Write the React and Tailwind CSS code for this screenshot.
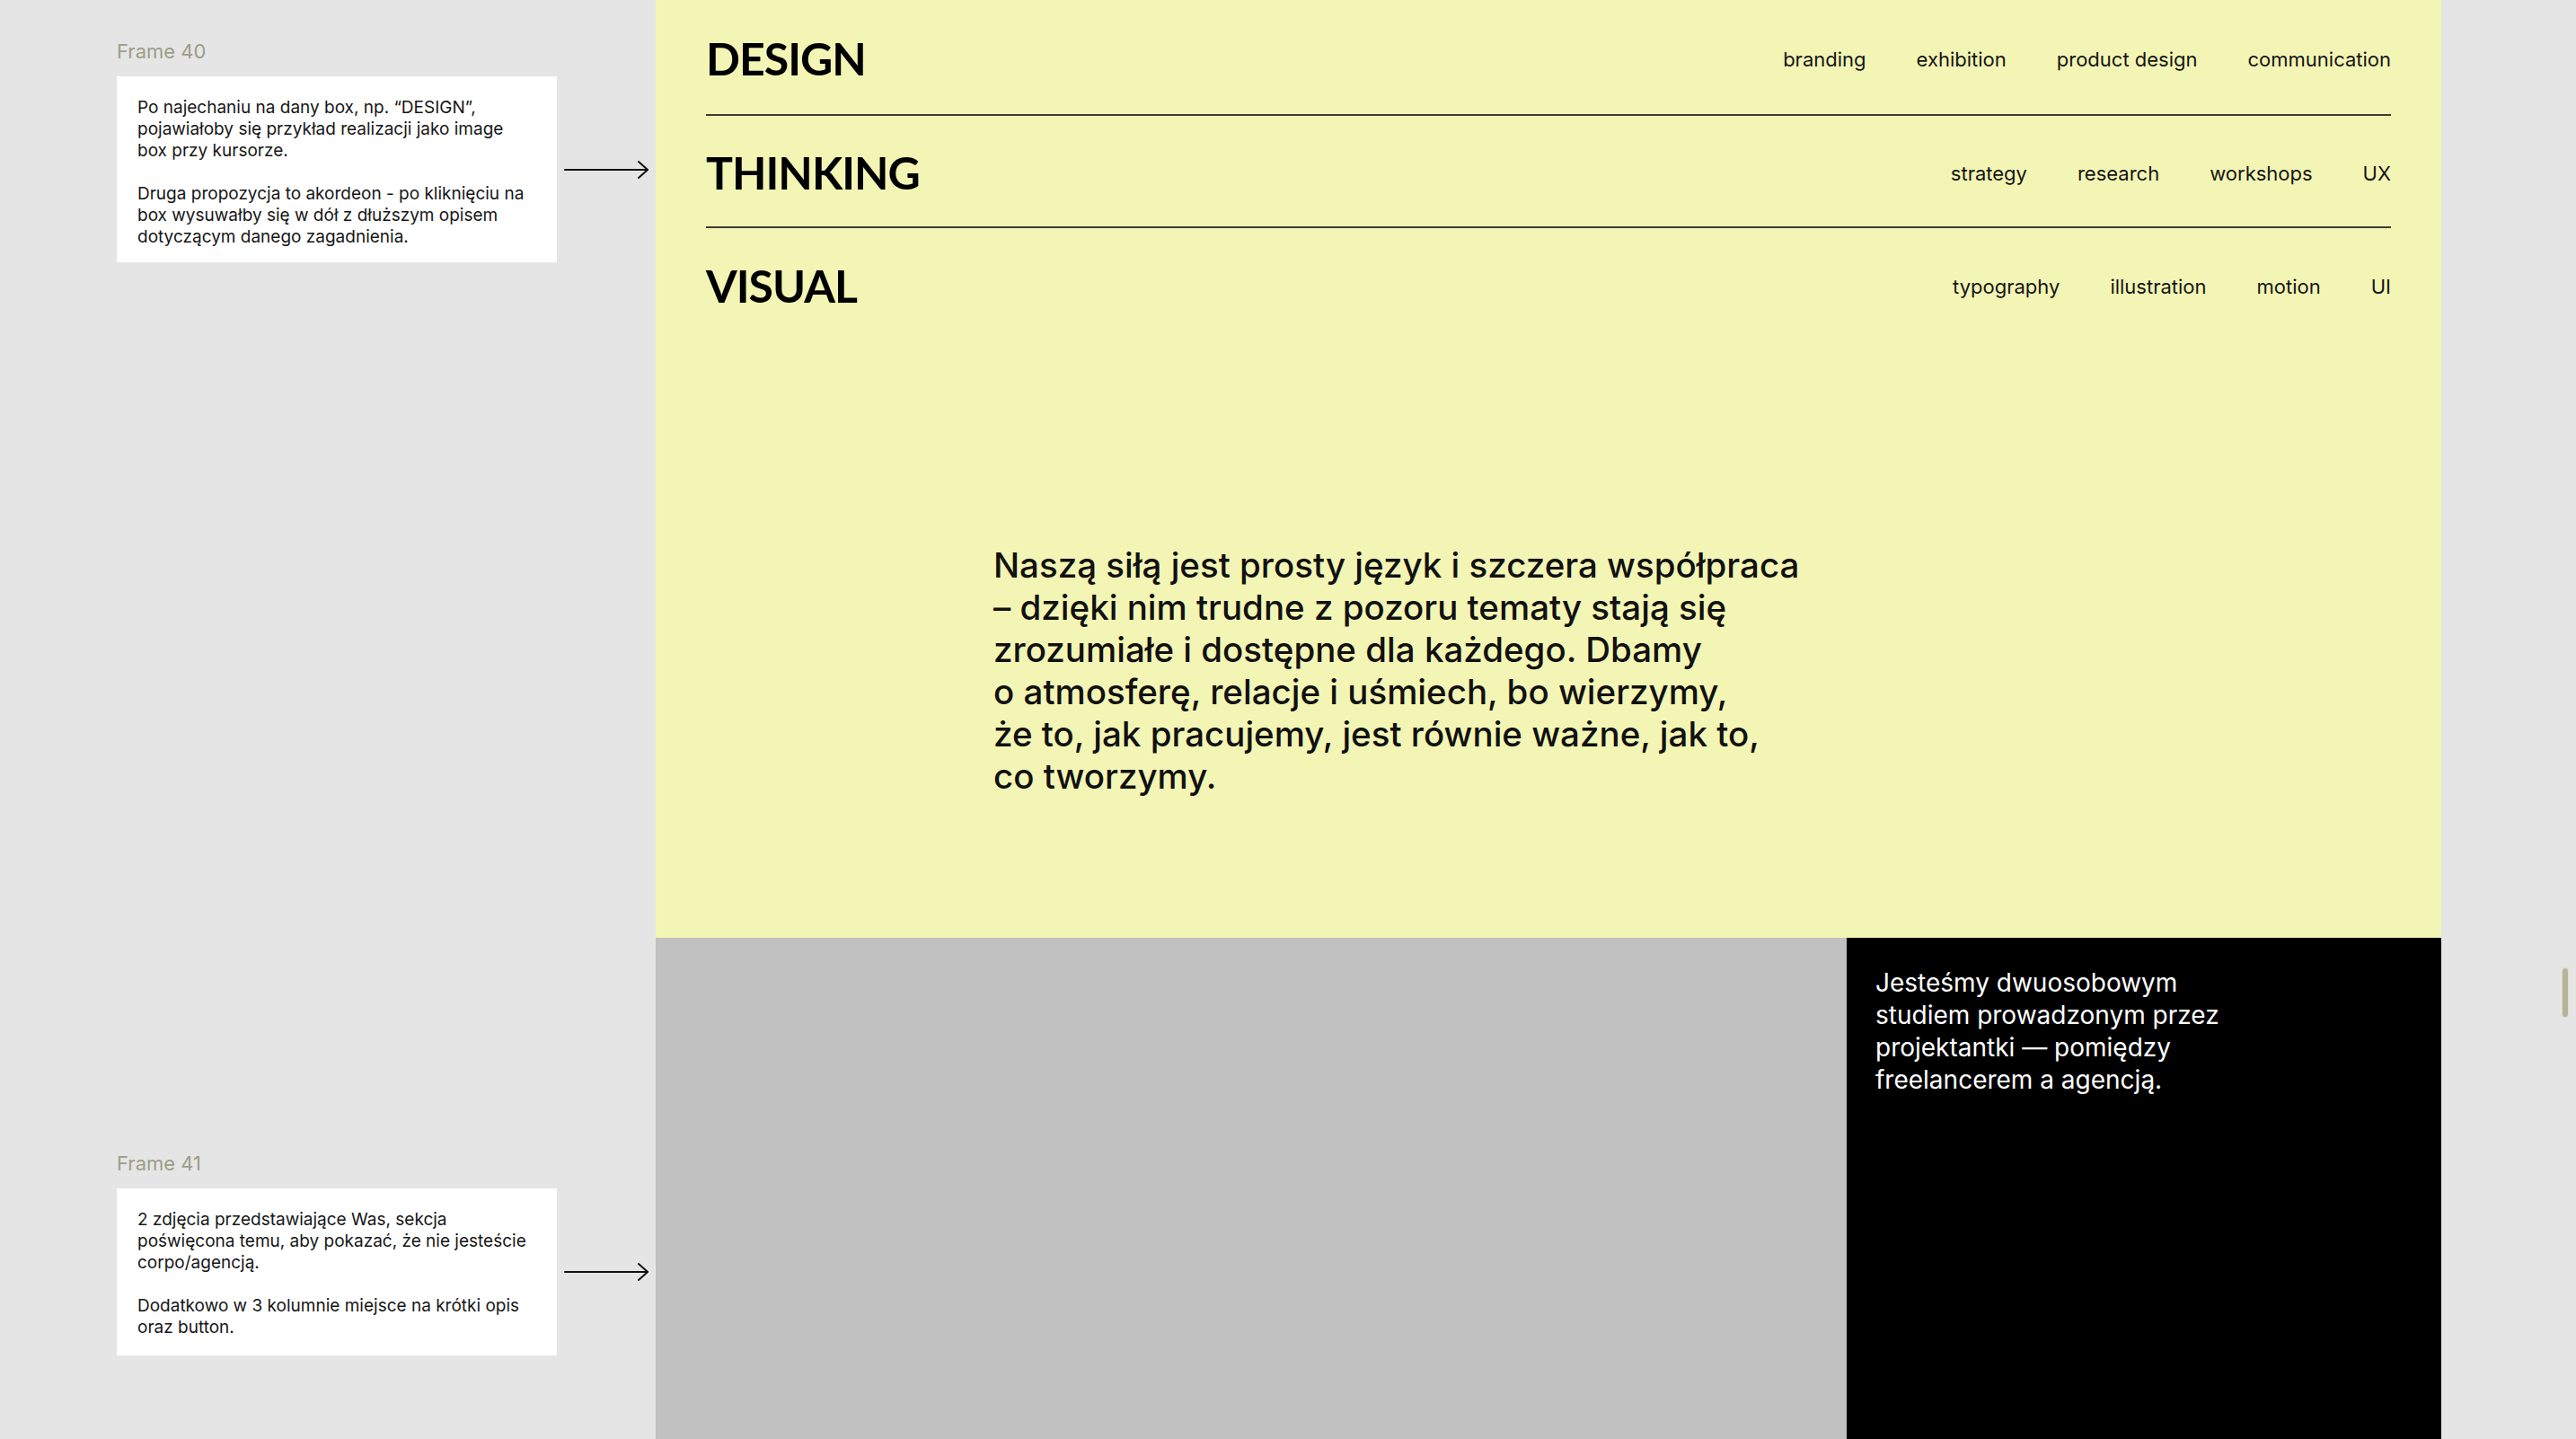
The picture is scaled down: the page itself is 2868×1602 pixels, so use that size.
const notes = [
  {
    label: 'Frame 40',
    paragraphs: [
      ['Po najechaniu na dany box, np. “DESIGN”,', 'pojawiałoby się przykład realizacji jako image', 'box przy kursorze.'],
      ['Druga propozycja to akordeon - po kliknięciu na', 'box wysuwałby się w dół z dłuższym opisem', 'dotyczącym danego zagadnienia.'],
    ],
  },
  {
    label: 'Frame 41',
    paragraphs: [
      ['2 zdjęcia przedstawiające Was, sekcja', 'poświęcona temu, aby pokazać, że nie jesteście', 'corpo/agencją.'],
      ['Dodatkowo w 3 kolumnie miejsce na krótki opis', 'oraz button.'],
    ],
  },
];

const services = [
  { title: 'DESIGN', tags: ['branding', 'exhibition', 'product design', 'communication'], h: 'h-[129px]' },
  { title: 'THINKING', tags: ['strategy', 'research', 'workshops', 'UX'], h: 'h-[125px]' },
  { title: 'VISUAL', tags: ['typography', 'illustration', 'motion', 'UI'], h: 'h-[124px]' },
];

const manifesto = [
  'Naszą siłą jest prosty język i szczera współpraca',
  '– dzięki nim trudne z pozoru tematy stają się',
  'zrozumiałe i dostępne dla każdego. Dbamy',
  'o atmosferę, relacje i uśmiech, bo wierzymy,',
  'że to, jak pracujemy, jest równie ważne, jak to,',
  'co tworzymy.',
];

const about = ['Jesteśmy dwuosobowym', 'studiem prowadzonym przez', 'projektantki — pomiędzy', 'freelancerem a agencją.'];

function Arrow() {
  return (
    <svg width="95" height="22" viewBox="0 0 95 22" fill="none" stroke="#111" strokeWidth="2" strokeLinecap="round" strokeLinejoin="round">
      <path d="M1 11h92" />
      <path d="M83 2l10 9-10 9" />
    </svg>
  );
}

function Note({ label, paragraphs, className = '', boxPad = 'pb-[16px]' }) {
  return (
    <div className={className}>
      <p className="text-[22px] leading-[28px] text-[#9d9d87]">{label}</p>
      <div className="mt-[14px] flex items-center">
        <div className={`w-[490px] bg-white pl-[23px] pr-4 pt-[23px] ${boxPad} text-[19px] leading-[24px] text-[#161616]`}>
          {paragraphs.map((lines, i) => (
            <p key={i} className={i > 0 ? 'mt-[24px]' : ''}>
              {lines.map((l, j) => (
                <span key={j} className="block whitespace-nowrap">{l}</span>
              ))}
            </p>
          ))}
        </div>
        <div className="ml-[8px]">
          <Arrow />
        </div>
      </div>
    </div>
  );
}

export default function App() {
  return (
    <div className="flex h-[1602px] w-[2868px] overflow-hidden bg-[#e5e5e5] font-[Inter,sans-serif]">
      {/* annotations column */}
      <aside className="w-[730px] shrink-0 pl-[130px] pt-[43px]">
        <Note {...notes[0]} />
        <Note {...notes[1]} className="mt-[989px]" boxPad="pb-[19px]" />
      </aside>

      <main className="flex w-[1988px] shrink-0 flex-col">
        <section className="h-[1044px] bg-[#f3f5b4] px-14">
          {services.map((s, i) => (
            <div
              key={s.title}
              className={`flex items-center justify-between ${s.h} ${i < services.length - 1 ? 'border-b-2 border-[#3c3c36]' : ''}`}
            >
              <h2 className="pt-[3px] font-[Lato,sans-serif] text-[50px] font-bold leading-[50px] tracking-[-1px] text-black">{s.title}</h2>
              <ul className="flex gap-14 pt-[5px] text-[22px] leading-[28px] text-[#151515]">
                {s.tags.map((t) => (
                  <li key={t}>{t}</li>
                ))}
              </ul>
            </div>
          ))}

          <p className="ml-[320px] mt-[228px] text-[38.5px] font-medium leading-[47px] text-[#111]">
            {manifesto.map((l) => (
              <span key={l} className="block whitespace-nowrap">{l}</span>
            ))}
          </p>
        </section>

        <section className="flex flex-1">
          <div className="flex-1 bg-[#c1c1c1]" />
          <div className="w-[662px] bg-black p-8 text-[28px] leading-[36px] text-white">
            {about.map((l) => (
              <span key={l} className="block whitespace-nowrap">{l}</span>
            ))}
          </div>
        </section>
      </main>

      {/* scroll thumb */}
      <div className="relative flex-1">
        <div className="absolute left-[134px] top-[1077px] h-[56px] w-2 rounded-full border border-[#dedec8] bg-[#b4b49a]" />
      </div>
    </div>
  );
}
